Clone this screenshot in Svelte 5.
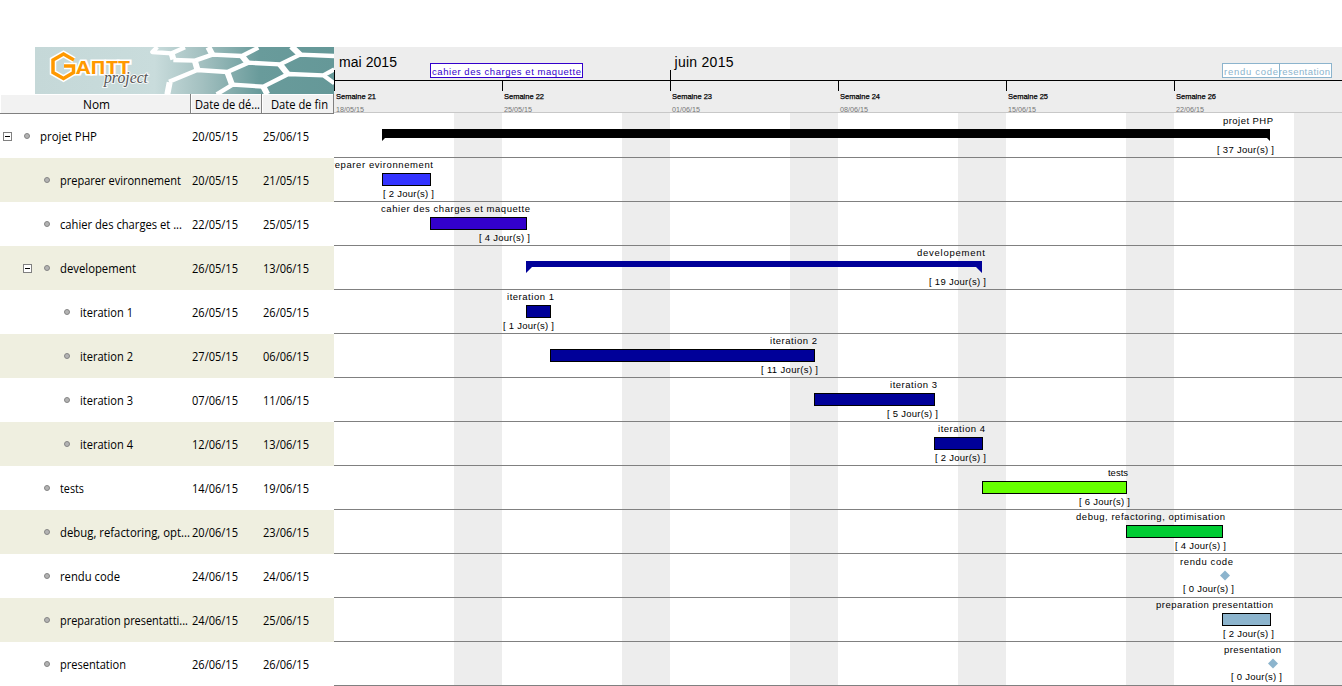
<script>
  const tasks = [
    { name: 'projet PHP', level: 0, open: true, start: '20/05/15', end: '25/06/15', kind: 'root', x: 382, x2: 1270, color: '#000000', lx: 1223, lw: 50, days: 37, dx: 1217 },
    { name: 'preparer evironnement', level: 1, start: '20/05/15', end: '21/05/15', kind: 'bar', x: 382, x2: 431, color: '#3333ff', lx: 325, lw: 108, days: 2, dx: 383 },
    { name: 'cahier des charges et maquette', short: 'cahier des charges et ...', level: 1, start: '22/05/15', end: '25/05/15', kind: 'bar', x: 430, x2: 527, color: '#3300cc', lx: 381, lw: 149, days: 4, dx: 479 },
    { name: 'developement', level: 1, open: true, start: '26/05/15', end: '13/06/15', kind: 'group', x: 526, x2: 982, color: '#000099', lx: 917, lw: 68, days: 19, dx: 929 },
    { name: 'iteration 1', level: 2, start: '26/05/15', end: '26/05/15', kind: 'bar', x: 526, x2: 551, color: '#000099', lx: 507, lw: 47, days: 1, dx: 503 },
    { name: 'iteration 2', level: 2, start: '27/05/15', end: '06/06/15', kind: 'bar', x: 550, x2: 815, color: '#000099', lx: 770, lw: 47, days: 11, dx: 761 },
    { name: 'iteration 3', level: 2, start: '07/06/15', end: '11/06/15', kind: 'bar', x: 814, x2: 935, color: '#000099', lx: 890, lw: 47, days: 5, dx: 887 },
    { name: 'iteration 4', level: 2, start: '12/06/15', end: '13/06/15', kind: 'bar', x: 934, x2: 983, color: '#000099', lx: 938, lw: 47, days: 2, dx: 935 },
    { name: 'tests', level: 1, start: '14/06/15', end: '19/06/15', kind: 'bar', x: 982, x2: 1127, color: '#66ff00', lx: 1108, lw: 20, days: 6, dx: 1079 },
    { name: 'debug, refactoring, optimisation', short: 'debug, refactoring, opt...', level: 1, start: '20/06/15', end: '23/06/15', kind: 'bar', x: 1126, x2: 1223, color: '#00cc33', lx: 1076, lw: 149, days: 4, dx: 1175 },
    { name: 'rendu code', level: 1, start: '24/06/15', end: '24/06/15', kind: 'milestone', x: 1225, x2: 1225, color: '#8cb4cd', lx: 1180, lw: 53, days: 0, dx: 1183 },
    { name: 'preparation presentattion', short: 'preparation presentatti...', level: 1, start: '24/06/15', end: '25/06/15', kind: 'bar', x: 1222, x2: 1271, color: '#8cb4cd', lx: 1156, lw: 117, days: 2, dx: 1223 },
    { name: 'presentation', level: 1, start: '26/06/15', end: '26/06/15', kind: 'milestone', x: 1273, x2: 1273, color: '#8cb4cd', lx: 1224, lw: 57, days: 0, dx: 1231 }
  ];
  const weeks = [
    ['Semaine 21', '18/05/15'], ['Semaine 22', '25/05/15'], ['Semaine 23', '01/06/15'],
    ['Semaine 24', '08/06/15'], ['Semaine 25', '15/06/15'], ['Semaine 26', '22/06/15']
  ];
  const widths = { 'projet PHP': 57, 'preparer evironnement': 121, 'cahier des charges et ...': 122, developement: 76, tests: 24, 'debug, refactoring, opt...': 130, 'rendu code': 60, 'preparation presentatti...': 128, presentation: 66 };
  const nameWidth = (s) => widths[s] ?? 53;
</script>

<div class="app">
  <aside>
    <svg class="banner" width="299" height="47" viewBox="0 0 299 47">
      <defs>
        <linearGradient id="sea"><stop offset="0" stop-color="#c5d8d8" /><stop offset=".4" stop-color="#c9dcdc" /><stop offset=".56" stop-color="#a3c0c0" /><stop offset=".75" stop-color="#699b9b" /><stop offset="1" stop-color="#659898" /></linearGradient>
      </defs>
      <rect width="299" height="47" fill="url(#sea)" />
      <g transform="translate(115 -3) scale(.33333)" fill="none" stroke="#fff" stroke-width="13" stroke-linejoin="round">
        <path d="M22 9L7 24L65 28L105 10M135 50L187 32L276 36L325 11M232 84L295 56L390 61L450 32L553 36M57 113L142 78L232 84M553 76L520 94L415 90L340 128L248 122L200 151M70 48L135 50M520 94L553 118" />
        <path stroke-width="18" d="M65 28L70 46M135 52L142 76M187 32L175 9M276 36L292 56M232 84L246 122M390 61L413 90M450 32L424 7M340 128L352 151M59 115L52 151" />
      </g>
      <path d="M39 13L28.500 7L18 13V25.500L28.500 31.500L38.500 25.500V19H29" fill="none" stroke="#fff" stroke-width="6.500" />
      <text class="brand" x="41" y="26.500" textLength="54" lengthAdjust="spacingAndGlyphs">AПTT</text>
      <path d="M39 13L28.500 7L18 13V25.500L28.500 31.500L38.500 25.500V19H29" fill="none" stroke="#ff9900" stroke-width="3.500" />
      <text x="69" y="36" font-family="Liberation Serif, serif" font-style="italic" font-size="16" fill="#555" stroke="#f5f8f8" stroke-width="2" paint-order="stroke" textLength="44" lengthAdjust="spacingAndGlyphs">project</text>
    </svg>
    <div class="heads">
      <div><svg width="27" height="19"><text x="0" y="15" textLength="27" lengthAdjust="spacingAndGlyphs">Nom</text></svg></div>
      <div><svg width="70" height="19"><text x="4" y="15" textLength="65" lengthAdjust="spacingAndGlyphs">Date de dé...</text></svg></div>
      <div><svg width="71" height="19"><text x="9" y="15" textLength="57" lengthAdjust="spacingAndGlyphs">Date de fin</text></svg></div>
    </div>
    {#each tasks as t, i}
      <div class="row" class:alt={i % 2 === 1}>
        <div class="name" style:padding-left="{3 + t.level * 20}px">
          <svg width="9" height="9" viewBox="0 0 9 9">
            {#if t.open}
              <rect x=".5" y=".5" width="8" height="8" fill="#fff" stroke="#808080" /><path d="M2 4.500H7" stroke="#000" />
            {/if}
          </svg>
          <span class="dot"></span>
          <svg class="label" width="132" height="20"><text x="0" y="15" textLength={nameWidth(t.short ?? t.name)} lengthAdjust="spacingAndGlyphs">{t.short ?? t.name}</text></svg>
        </div>
        <svg class="date" width="71" height="20"><text x="1" y="15" textLength="46" lengthAdjust="spacingAndGlyphs">{t.start}</text></svg>
        <svg class="date" width="71" height="20"><text x="1" y="15" textLength="46" lengthAdjust="spacingAndGlyphs">{t.end}</text></svg>
      </div>
    {/each}
  </aside>

  <svg class="chart" width="1008" height="639" viewBox="334 47 1008 639">
    <defs><clipPath id="late"><rect x="1280" y="60" width="60" height="20" /></clipPath></defs>
    <rect x="334" y="47" width="1008" height="65" fill="#ededed" />
    {#each weeks as w, i}
      <rect x={454 + i * 168} y="113" width="48" height="573" fill="#ededed" />
      <rect x={334 + i * 168} y={i % 2 === 0 && i < 3 ? 70 : 81} width="1" height={i % 2 === 0 && i < 3 ? 21 : 10} />
      <text x={336 + i * 168} y="99" class="week" textLength="40" lengthAdjust="spacingAndGlyphs">{w[0]}</text>
      <text x={336 + i * 168} y="112" class="day" textLength="28" lengthAdjust="spacingAndGlyphs">{w[1]}</text>
    {/each}
    <rect x="334" y="80" width="1008" height="1" />
    <rect x="334" y="112" width="1008" height="1" fill="#c8c8c8" />
    <text x="339" y="67" class="month" textLength="58">mai 2015</text>
    <text x="674.500" y="67" class="month" textLength="59">juin 2015</text>

    <rect x="430.500" y="63.500" width="152" height="14" fill="#fff" stroke="#3300cc" />
    <text x="432" y="75" fill="#3300cc" textLength="149">cahier des charges et maquette</text>
    <rect x="1270.500" y="63.500" width="61" height="14" fill="#fff" stroke="#8cb4cd" />
    <text x="1273" y="75" fill="#8cb4cd" textLength="57" clip-path="url(#late)">presentation</text>
    <rect x="1222.500" y="63.500" width="57" height="14" fill="#fff" stroke="#8cb4cd" />
    <text x="1224" y="75" fill="#8cb4cd" textLength="54">rendu code</text>

    {#each tasks as t, i}
      {@const y = 114 + i * 44}
      {@const m = t.kind === 'milestone' ? 1 : 0}
      <rect x="334" y={y + 43} width="1008" height="1" fill="#808080" />
      {#if t.kind === 'bar'}
        <rect x={t.x + 0.5} y={y + 15.5} width={t.x2 - t.x - 1} height="12" fill={t.color} stroke="#000" />
      {:else if t.kind === 'milestone'}
        <path d="M{t.x - 5} {y + 21.5}l5 -5l5 5l-5 5z" fill={t.color} />
      {:else if t.kind === 'root'}
        <path d="M{t.x} {y + 15}H{t.x2}V{y + 27}l-3 -3H{t.x + 3}l-3 3z" fill={t.color} />
      {:else}
        <path d="M{t.x} {y + 15}H{t.x2}V{y + 27}l-6 -6H{t.x + 6}l-6 6z" fill={t.color} />
      {/if}
      <text x={t.lx} y={y + 10 + m} textLength={t.lw}>{t.name}</text>
      <text x={t.dx} y={y + 39 - m} textLength={t.days > 9 ? 57 : 51}>[ {t.days} Jour(s) ]</text>
    {/each}
  </svg>
</div>

<style>
  :global(body) { margin: 0; background: #fff; overflow: hidden; }
  .app { display: flex; width: 1342px; height: 686px; box-sizing: border-box; padding-top: 47px; overflow: hidden; }
  svg { display: block; flex: none; }
  aside { width: 334px; flex: none; font: 12.5px "Open Sans", "Noto Sans", sans-serif; color: #000; }
  .banner { margin-left: 35px; }
  .brand { font: bold 17px "Open Sans", sans-serif; fill: #ff9900; stroke: #fff; stroke-width: 3px; paint-order: stroke; }
  .heads { display: grid; grid-template-columns: 191px 71px 72px; height: 20px; background: #f2f2f2; }
  .heads div { display: flex; justify-content: center; border-right: 1px solid #808080; border-bottom: 1px solid #808080; height: 19px; box-shadow: inset 1px 1px #fff; }
  .heads div:first-child { padding-left: 3px; }
  .row { display: flex; height: 44px; align-items: center; }
  .alt { background: #efefe0; }
  .name { box-sizing: border-box; width: 191px; display: flex; align-items: center; flex: none; overflow: hidden; }
  .dot { width: 6px; height: 6px; margin: 0 10px 0 12px; flex: none; border-radius: 50%; box-sizing: border-box; border: 1px solid #858585; background: #b3b3b3; }
  .chart { font-family: "Liberation Sans", Arial, sans-serif; font-size: 9.5px; }
  .month { font-size: 14px; }
  .week { font-size: 8px; stroke: #000; stroke-width: 0.25px; }
  .day { font-size: 7px; fill: #777; }
</style>
